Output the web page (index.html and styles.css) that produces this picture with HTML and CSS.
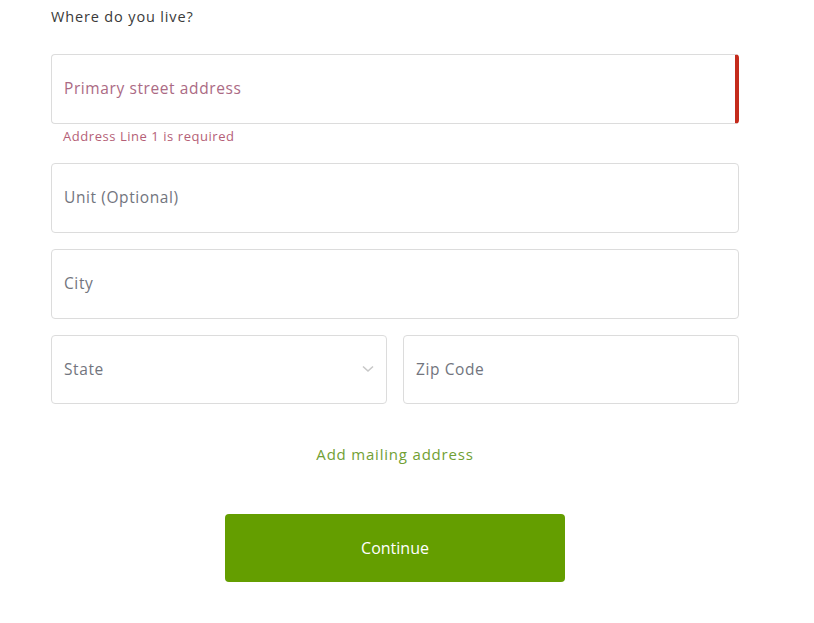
FILE: index.html
```html
<!DOCTYPE html>
<html>
<head>
<meta charset="utf-8">
<link rel="stylesheet" href="styles.css">
</head>
<body>
<div class="form">
  <div class="title">Where do you live?</div>
  <div class="field">
    <div class="input error">Primary street address</div>
    <div class="err-msg">Address Line 1 is required</div>
  </div>
  <div class="field">
    <div class="input">Unit (Optional)</div>
  </div>
  <div class="field">
    <div class="input">City</div>
  </div>
  <div class="row">
    <div class="input select">State
      <svg class="chev" width="12" height="8" viewBox="0 0 12 8"><path d="M1 1.5 L6 6 L11 1.5" fill="none" stroke="#c8c8c8" stroke-width="1.6"/></svg>
    </div>
    <div class="input">Zip Code</div>
  </div>
  <div class="link">Add mailing address</div>
  <div class="btn-wrap"><div class="btn">Continue</div></div>
</div>
</body>
</html>
```
FILE: styles.css
```css
body {
  margin: 0;
  background: #fff;
  font-family: "Open Sans", "Noto Sans", sans-serif;
}
.form {
  width: 688px;
  margin-left: 51px;
  padding-top: 7px;
}
.title {
  font-size: 14.5px;
  color: #3a3a3a;
  line-height: 20px;
  letter-spacing: 0.85px;
  margin-bottom: 27px;
}
.field {
  margin-bottom: 16px;
}
.input {
  box-sizing: border-box;
  height: 70px;
  border: 1px solid #dcdcdc;
  border-radius: 4px;
  padding: 0 12px 2px;
  display: flex;
  align-items: center;
  font-size: 15.5px;
  letter-spacing: 0.6px;
  color: #72757e;
}
.input.error {
  border-right: 4px solid #c42b1c;
  color: #ab6a84;
}
.err-msg {
  font-size: 13px;
  color: #b55f77;
  padding-left: 12px;
  margin-top: 4px;
  line-height: 17px;
  letter-spacing: 0.55px;
  margin-bottom: 18px;
}
.row {
  display: flex;
  gap: 16px;
}
.row .input {
  flex: 1;
  height: 69px;
}
.select {
  justify-content: space-between;
}
.link {
  text-align: center;
  color: #71a034;
  font-size: 15px;
  letter-spacing: 0.8px;
  margin-top: 40px;
  line-height: 20px;
}
.btn-wrap {
  display: flex;
  justify-content: center;
  margin-top: 50px;
}
.btn {
  width: 340px;
  height: 68px;
  background: #649e00;
  border-radius: 4px;
  color: #fff;
  font-family: "Open Sans", sans-serif;
  font-size: 16px;
  display: flex;
  align-items: center;
  justify-content: center;
}
```
